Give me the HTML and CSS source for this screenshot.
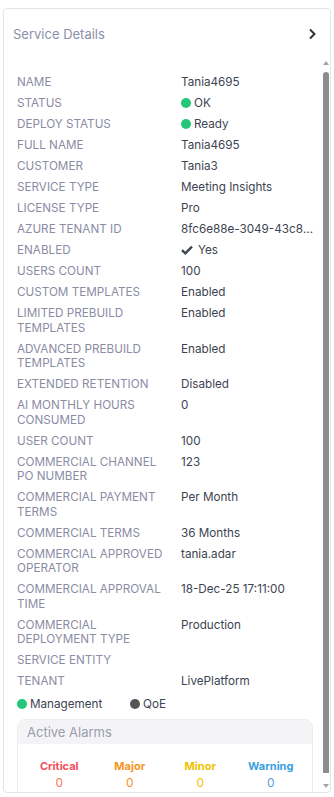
FILE: index.html
```html
<!DOCTYPE html>
<html lang="en">
<head>
    <meta charset="UTF-8">
    <meta name="viewport" content="width=device-width, initial-scale=1.0">
    <title>Service Details</title>
    <link rel="stylesheet" href="styles.css">
</head>
<body>
    <div class="panel">
        <div class="panel-head">
            <span class="panel-title">Service Details</span>
            <svg class="chevron" width="10" height="12" viewBox="0 0 10 12"><path d="M3 1.5 L7.5 6 L3 10.5" fill="none" stroke="#333" stroke-width="2"/></svg>
        </div>
        <div class="panel-scroll">
            <div class="panel-body">
                <div class="details">
                    <div class="row"><span class="label">Name</span><span class="value">Tania4695</span></div>
                    <div class="row"><span class="label">Status</span><span class="value"><i class="dot green"></i>OK</span></div>
                    <div class="row"><span class="label">Deploy Status</span><span class="value"><i class="dot green"></i>Ready</span></div>
                    <div class="row"><span class="label">Full Name</span><span class="value">Tania4695</span></div>
                    <div class="row"><span class="label">Customer</span><span class="value">Tania3</span></div>
                    <div class="row"><span class="label">Service Type</span><span class="value">Meeting Insights</span></div>
                    <div class="row"><span class="label">License Type</span><span class="value">Pro</span></div>
                    <div class="row"><span class="label">Azure Tenant ID</span><span class="value cut">8fc6e88e-3049-43c8-9a1e-55d2b7f04c61</span></div>
                    <div class="row"><span class="label">Enabled</span><span class="value"><svg class="check" width="12" height="10" viewBox="0 0 12 10"><path d="M1 5.2 L4.3 8.3 L11 1.6" fill="none" stroke="#3d4451" stroke-width="2.4"/></svg>Yes</span></div>
                    <div class="row"><span class="label">Users Count</span><span class="value">100</span></div>
                    <div class="row"><span class="label">Custom Templates</span><span class="value">Enabled</span></div>
                    <div class="row"><span class="label">Limited Prebuild Templates</span><span class="value">Enabled</span></div>
                    <div class="row"><span class="label">Advanced Prebuild Templates</span><span class="value">Enabled</span></div>
                    <div class="row"><span class="label">Extended Retention</span><span class="value">Disabled</span></div>
                    <div class="row"><span class="label">AI Monthly Hours Consumed</span><span class="value">0</span></div>
                    <div class="row"><span class="label">User Count</span><span class="value">100</span></div>
                    <div class="row"><span class="label">Commercial Channel PO Number</span><span class="value">123</span></div>
                    <div class="row"><span class="label">Commercial Payment Terms</span><span class="value">Per Month</span></div>
                    <div class="row"><span class="label">Commercial Terms</span><span class="value">36 Months</span></div>
                    <div class="row"><span class="label">Commercial Approved Operator</span><span class="value">tania.adar</span></div>
                    <div class="row"><span class="label">Commercial Approval Time</span><span class="value">18-Dec-25 17:11:00</span></div>
                    <div class="row"><span class="label">Commercial Deployment Type</span><span class="value">Production</span></div>
                    <div class="row"><span class="label">Service Entity</span><span class="value"></span></div>
                    <div class="row"><span class="label">Tenant</span><span class="value">LivePlatform</span></div>
                </div>
                <div class="legend">
                    <span class="legend-item"><i class="dot green"></i>Management</span>
                    <span class="legend-item"><i class="dot gray"></i>QoE</span>
                </div>
                <div class="alarms">
                    <div class="alarms-head">Active Alarms</div>
                    <div class="alarms-body">
                        <div class="alarm critical"><b>Critical</b><span>0</span></div>
                        <div class="alarm major"><b>Major</b><span>0</span></div>
                        <div class="alarm minor"><b>Minor</b><span>0</span></div>
                        <div class="alarm warning"><b>Warning</b><span>0</span></div>
                    </div>
                </div>
            </div>
            <div class="scrollbar">
                <span class="sb-up"></span>
                <span class="sb-thumb"></span>
                <span class="sb-down"></span>
            </div>
        </div>
    </div>
</body>
</html>
```

FILE: styles.css
```css
body { margin: 0; padding: 0; background-color: #fff; font-family: Inter, "Noto Sans", sans-serif; color: #3d4451; }
.panel { margin: 8px 3px 4px 3px; height: 785px; border: 1px solid #e4e4e4; border-radius: 4px; display: flex; flex-direction: column; overflow: hidden; box-sizing: border-box; }
.panel-head { height: 49px; flex: none; display: flex; align-items: center; justify-content: space-between; padding: 0 13px 0 9px; }
.panel-title { font-size: 13px; color: #8a8fab; }
.chevron { display: block; }
.panel-scroll { flex: 1; min-height: 0; display: flex; overflow: hidden; }
.panel-body { flex: 1; min-width: 0; padding: 14px 4px 0 13px; }
.row { display: grid; grid-template-columns: 164px 1fr; align-items: start; padding: 3px 0 3.5px 0; font-size: 11.7px; line-height: 14.5px; }
.label { text-transform: uppercase; color: #8b8ca4; padding-right: 14px; }
.value { display: flex; align-items: center; height: 14.5px; min-width: 0; white-space: nowrap; }
.value.cut { display: block; overflow: hidden; text-overflow: ellipsis; }
.dot { display: inline-block; width: 10px; height: 10px; border-radius: 50%; margin-right: 3px; flex: none; }
.dot.green { background-color: #22c77a; }
.dot.gray { background-color: #555; }
.check { margin-right: 5px; flex: none; }
.legend { display: flex; font-size: 11.7px; line-height: 14.5px; padding: 5px 0 0 0; }
.legend-item { display: flex; align-items: center; width: 113px; }
.alarms { margin-top: 7px; margin-right: 5px; border: 1px solid #ececee; border-radius: 8px 8px 0 0; }
.alarms-head { background-color: #f4f4f6; height: 24px; line-height: 24px; padding-left: 9px; font-size: 13px; color: #9a9cb0; border-radius: 8px 8px 0 0; }
.alarms-body { display: grid; grid-template-columns: repeat(4, 1fr); padding: 15px 6px 20px 6px; text-align: center; }
.alarm b { display: block; font-size: 11px; font-weight: 700; }
.alarm span { display: block; font-size: 12px; margin-top: 2px; }
.critical { color: #f0505a; }
.critical span { color: #f27a5e; }
.major { color: #f7941d; }
.minor { color: #f2c200; }
.warning { color: #3aa0e0; }
.warning span { color: #5b9fd8; }
.scrollbar { width: 8px; flex: none; display: flex; flex-direction: column; align-items: center; padding: 3px 0 4px 0; }
.sb-up, .sb-down { width: 0; height: 0; border-left: 3.5px solid transparent; border-right: 3.5px solid transparent; flex: none; }
.sb-up { border-bottom: 4px solid #a3a3a3; margin-bottom: 7px; }
.sb-down { border-top: 4px solid #a3a3a3; margin-top: 11px; }
.sb-thumb { flex: 1; width: 6px; background-color: #8c8c8c; border-radius: 3px 3px 0 0; }
```
